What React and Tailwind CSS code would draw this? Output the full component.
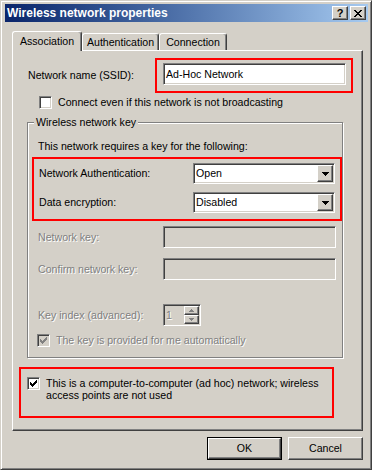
import React from 'react';

// classic 3D edges
const raised =
  'border border-t-white border-l-white border-r-[#404040] border-b-[#404040] shadow-[inset_-1px_-1px_0_#808080]';
const sunken =
  'border border-t-[#808080] border-l-[#808080] border-r-white border-b-white shadow-[inset_1px_1px_0_#404040,inset_-1px_-1px_0_#d4d0c8]';
const disabledText = 'text-[#808080] [text-shadow:1px_1px_0_#fff]';

const Check = ({ color }) => (
  <svg width="7" height="7" viewBox="0 0 7 7" shapeRendering="crispEdges">
    <path
      fill={color}
      d="M6 0h1v1h-1z M5 1h2v1h-2z M0 2h1v1h-1z M4 2h3v1h-3z M0 3h2v1h-2z M3 3h3v1h-3z M0 4h5v1h-5z M1 5h3v1h-3z M2 6h1v1h-1z"
    />
  </svg>
);

const Checkbox = ({ checked, disabled }) => (
  <div
    className={`${sunken} w-[13px] h-[13px] shrink-0 flex items-center justify-center ${
      disabled ? 'bg-[#d4d0c8]' : 'bg-white'
    }`}
  >
    {checked && <Check color={disabled ? '#808080' : '#000'} />}
  </div>
);

const DownArrow = () => (
  <svg width="7" height="4" viewBox="0 0 7 4" shapeRendering="crispEdges">
    <path fill="#000" d="M0 0h7v1h-1v1h-1v1h-1v1h-1v-1h-1v-1h-1v-1h-1z" />
  </svg>
);

const Combo = ({ value }) => (
  <div className={`${sunken} bg-white w-[142px] h-[21px] flex items-center`}>
    <span className="flex-1 pl-[2px] leading-[13px]">{value}</span>
    <div className={`${raised} bg-[#d4d0c8] w-[16px] h-[17px] mr-[1px] flex items-center justify-center`}>
      <DownArrow />
    </div>
  </div>
);

const TextField = ({ value, disabled, className = '' }) => (
  <div
    className={`${sunken} h-[22px] flex items-center ${disabled ? 'bg-[#d4d0c8]' : 'bg-white'} ${className}`}
  >
    <span className="pl-[2px] leading-[13px]">{value}</span>
  </div>
);

const SpinArrow = ({ up }) => (
  <svg width="5" height="3" viewBox="0 0 5 3" shapeRendering="crispEdges">
    <path
      fill="#808080"
      d={up ? 'M2 0h1v1h1v1h1v1h-5v-1h1v-1h1z' : 'M0 0h5v1h-1v1h-1v1h-1v-1h-1v-1h-1z'}
    />
  </svg>
);

const Spin = () => (
  <div className={`${sunken} bg-[#d4d0c8] w-[38px] h-[22px] flex items-center`}>
    <span className={`flex-1 pl-[2px] leading-[13px] ${disabledText}`}>1</span>
    <div className="flex flex-col mr-[1px]">
      <div className={`${raised} bg-[#d4d0c8] w-[15px] h-[9px] flex items-center justify-center`}>
        <SpinArrow up />
      </div>
      <div className={`${raised} bg-[#d4d0c8] w-[15px] h-[9px] flex items-center justify-center`}>
        <SpinArrow />
      </div>
    </div>
  </div>
);

const Button = ({ children, isDefault }) =>
  isDefault ? (
    <div className="w-[75px] h-[23px] border border-black">
      <div className={`${raised} w-full h-full flex items-center justify-center`}>{children}</div>
    </div>
  ) : (
    <div className={`${raised} w-[75px] h-[23px] flex items-center justify-center`}>{children}</div>
  );

const CloseGlyph = () => (
  <svg width="8" height="7" viewBox="0 0 8 7" shapeRendering="crispEdges">
    <path
      fill="#000"
      d="M0 0h2v1h-2z M6 0h2v1h-2z M1 1h2v1h-2z M5 1h2v1h-2z M2 2h4v1h-4z M3 3h2v1h-2z M2 4h4v1h-4z M1 5h2v1h-2z M5 5h2v1h-2z M0 6h2v1h-2z M6 6h2v1h-2z"
    />
  </svg>
);

export default function App() {
  return (
    <div className="w-[375px] h-[473px] bg-white font-['Liberation_Sans',Arial,sans-serif] text-[10.6px] text-black">
      <div className="w-[372px] h-[470px] bg-[#d4d0c8] border border-t-[#d4d0c8] border-l-[#d4d0c8] border-r-[#404040] border-b-[#404040] shadow-[inset_1px_1px_0_#fff,inset_-1px_-1px_0_#808080] pl-[4px] pr-[3px] pt-[3px] flex flex-col">
        {/* Title bar */}
        <div className="h-[18px] bg-linear-to-r from-[#0a246a] to-[#a6caf0] flex items-center pl-[2px]">
          <span className="text-white font-bold text-[12px] leading-[14px]">Wireless network properties</span>
          <div className="ml-auto mr-[2px] flex gap-[2px]">
            <div className={`${raised} bg-[#d4d0c8] w-[16px] h-[14px] flex items-center justify-center`}>
              <span className="font-bold text-[11px] leading-[11px]">?</span>
            </div>
            <div className={`${raised} bg-[#d4d0c8] w-[16px] h-[14px] flex items-center justify-center`}>
              <CloseGlyph />
            </div>
          </div>
        </div>

        {/* Tabs */}
        <div className="mt-[9px] ml-[7px] flex items-end">
          <div className="relative z-10 -mb-px w-[70px] h-[20px] bg-[#d4d0c8] border-l border-t border-r border-l-white border-t-white border-r-[#404040] rounded-t-[3px] shadow-[inset_-1px_0_0_#808080] flex justify-center pt-[3px]">
            <span className="leading-[13px]">Association</span>
          </div>
          <div className="w-[77px] h-[17px] border-l border-t border-r border-l-white border-t-white border-r-[#404040] rounded-t-[3px] shadow-[inset_-1px_0_0_#808080] flex justify-center pt-[2px]">
            <span className="leading-[13px]">Authentication</span>
          </div>
          <div className="w-[68px] h-[17px] border-l border-t border-r border-l-white border-t-white border-r-[#404040] rounded-t-[3px] shadow-[inset_-1px_0_0_#808080] flex justify-center pt-[2px]">
            <span className="leading-[13px]">Connection</span>
          </div>
        </div>

        {/* Tab page */}
        <div className="ml-[7px] w-[351px] h-[381px] border border-t-white border-l-white border-r-[#404040] border-b-[#404040] shadow-[inset_-1px_-1px_0_#808080] flex flex-col">
          <div className="mt-[7px] flex items-center">
            <div className="w-[142px] pl-[15px] leading-[13px]">Network name (SSID):</div>
            <div className="w-[198px] h-[35px] border-2 border-[#ff0000] pl-[6px] pt-[3px]">
              <TextField value="Ad-Hoc Network" className="w-[183px]" />
            </div>
          </div>

          <div className="mt-[3px] pl-[26px] flex items-center">
            <Checkbox />
            <span className="ml-[6px] leading-[13px]">Connect even if this network is not broadcasting</span>
          </div>

          <fieldset className="mt-[7px] ml-[14px] w-[316px] h-[242px] border border-[#808080] shadow-[inset_1px_1px_0_#fff,1px_1px_0_#fff]">
            <legend className="ml-[6px] px-[2px] leading-[13px] bg-[#d4d0c8]">Wireless network key</legend>
            <div className="flex flex-col">
              <div className="mt-[11px] pl-[10px] leading-[13px]">This network requires a key for the following:</div>

              <div className="mt-[4px] ml-[4px] w-[310px] h-[64px] border-2 border-[#ff0000] pt-[4px] pl-[5px]">
                <div className="flex items-center">
                  <div className="w-[154px] leading-[13px]">Network Authentication:</div>
                  <Combo value="Open" />
                </div>
                <div className="mt-[8px] flex items-center">
                  <div className="w-[154px] leading-[13px]">Data encryption:</div>
                  <Combo value="Disabled" />
                </div>
              </div>

              <div className="mt-[5px] pl-[10px] flex items-center">
                <div className={`w-[125px] leading-[13px] ${disabledText}`}>Network key:</div>
                <TextField disabled className="w-[173px]" />
              </div>
              <div className="mt-[10px] pl-[10px] flex items-center">
                <div className={`w-[125px] leading-[13px] ${disabledText}`}>Confirm network key:</div>
                <TextField disabled className="w-[173px]" />
              </div>
              <div className="mt-[24px] pl-[10px] flex items-center">
                <div className={`w-[125px] leading-[13px] ${disabledText}`}>Key index (advanced):</div>
                <Spin />
              </div>
              <div className="mt-[8px] pl-[9px] flex items-center">
                <Checkbox checked disabled />
                <span className={`ml-[6px] leading-[13px] ${disabledText}`}>
                  The key is provided for me automatically
                </span>
              </div>
            </div>
          </fieldset>

          <div className="mt-[9px] ml-[6px] w-[315px] h-[51px] border-2 border-[#ff0000] pl-[6px] pt-[8px] flex items-start">
            <Checkbox checked />
            <span className="ml-[6px] w-[280px] leading-[12px]">
              This is a computer-to-computer (ad hoc) network; wireless access points are not used
            </span>
          </div>
        </div>

        {/* Dialog buttons */}
        <div className="mt-[6px] mr-[5px] flex justify-end gap-[6px]">
          <Button isDefault>OK</Button>
          <Button>Cancel</Button>
        </div>
      </div>
    </div>
  );
}
